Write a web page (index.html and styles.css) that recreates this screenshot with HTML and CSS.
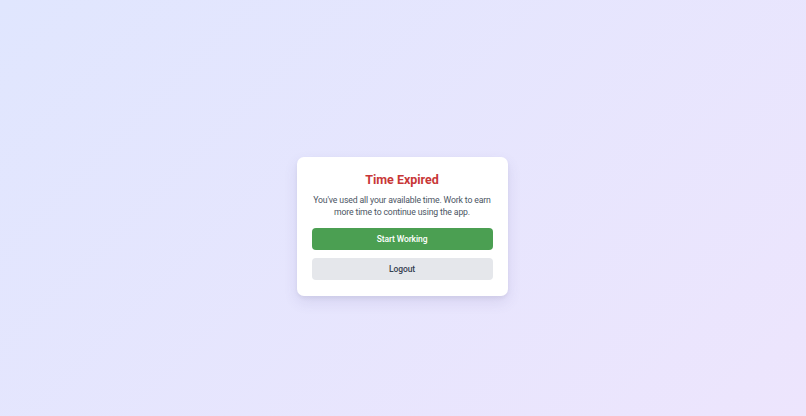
FILE: index.html
```html
<!DOCTYPE html>
<html lang="en">
<head>
  <meta charset="UTF-8">
  <meta name="viewport" content="width=device-width, initial-scale=1.0">
  <title>Time Expired</title>
  <link rel="stylesheet" href="styles.css">
</head>
<body>

  <!-- Expired session card -->
  <div class="expired-card">
    <h2>Time Expired</h2>
    <p>You've used all your available time. Work to earn more time to continue using the app.</p>
    <button class="btn btn-work" type="button">Start Working</button>
    <button class="btn btn-logout" type="button">Logout</button>
  </div>

</body>
</html>
```

FILE: styles.css
```css
/* General Reset */
* {
  margin: 0;
  padding: 0;
  box-sizing: border-box;
}

html, body {
  height: 100%;
}

body {
  font-family: 'Roboto', 'Liberation Sans', sans-serif;
  background: linear-gradient(135deg, #e0e6fe 0%, #ede5fd 100%);
  color: #4b5563;
  display: flex;
  align-items: center;
  justify-content: center;
  padding: 36px 2px 0 0;
}

/* Card */
.expired-card {
  background-color: #fff;
  width: 211px;
  padding: 15px 15px 16px;
  border-radius: 7px;
  box-shadow: 0 6px 14px rgba(80, 70, 140, 0.12), 0 2px 4px rgba(0, 0, 0, 0.05);
  text-align: center;
}

.expired-card h2 {
  font-size: 12.5px;
  font-weight: 700;
  line-height: 16px;
  color: #c83737;
  margin-bottom: 6px;
}

.expired-card p {
  font-size: 8.7px;
  letter-spacing: -0.15px;
  line-height: 12px;
  color: #4b5563;
  margin-bottom: 10px;
}

/* Buttons */
.btn {
  display: block;
  width: 100%;
  height: 22px;
  border: none;
  border-radius: 4px;
  font-family: inherit;
  font-size: 8.5px;
  letter-spacing: -0.1px;
  font-weight: 500;
  cursor: pointer;
}

.btn-work {
  background-color: #4b9f52;
  color: #fff;
  margin-bottom: 8px;
}

.btn-logout {
  background-color: #e5e7eb;
  color: #374151;
}
```
